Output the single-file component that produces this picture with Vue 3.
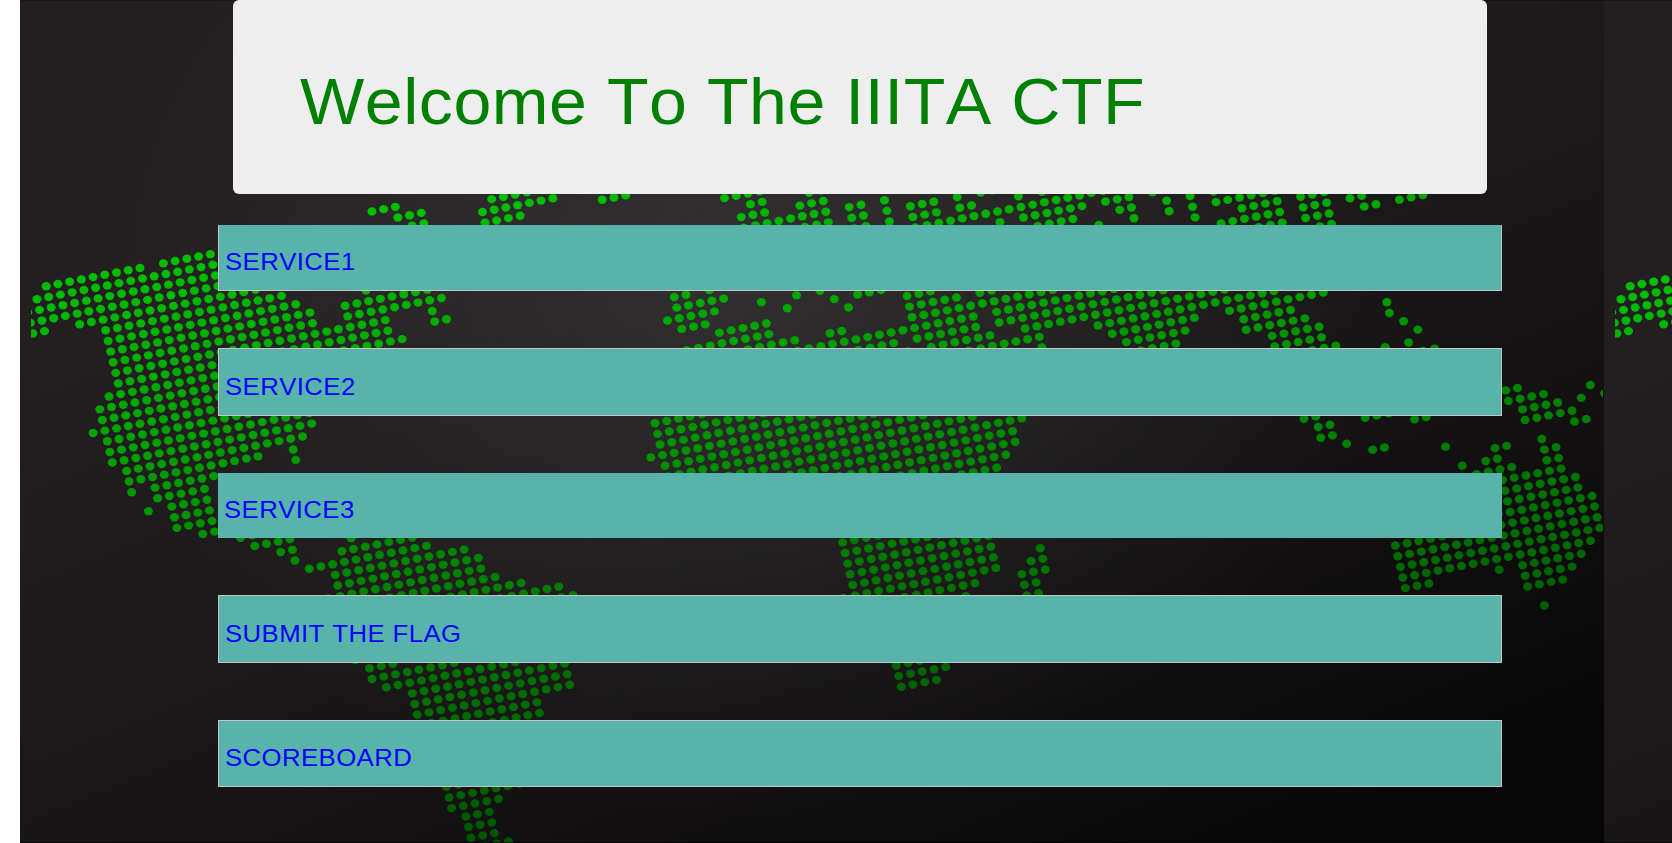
<script setup>
const STEP = [35.17, -6.88]
const COL = [7.545, 31.92]
const DET = STEP[0] * COL[1] - STEP[1] * COL[0]
const ORIGIN = [316, 990]

// Each run is [x, y, lastX] in thirds of a pixel, relative to its region.
const regions = [
  { x: 0, y: 180, runs: [
    [136,317,419],[490,248,631],[108,357,640],[81,394,647],[90,428,655],[98,461,131],[238,434,768],
    [316,450,844],[324,483,887],[331,511,929],[1034,374,1280],[340,545,936],[1042,407,1323],[1097,330,1097],
    [347,577,1155],[1296,391,1296],[355,610,1162],[1304,425,1339],[327,647,1205],[300,686,1100],
    [306,719,900],[279,758,900],[321,784,890],[329,817,929],[336,848,937],[380,874,909],[385,906,776],
    [881,808,881],[393,936,393],[464,922,642],[889,840,889],[473,953,614],[445,994,445],[515,977,622],
    [524,1010,629],[531,1044,637],[609,1062,644],[722,1074,757],[765,1099,871],[843,1114,878],[885,1140,885],
    [1117,95,1187],[1193,116,1265],[1236,137,1272]
  ] },
  { x: 200, y: 180, runs: [[872,57,978],[848,94,1059],[855,129,960],[1208,59,1276]] },
  { x: 640, y: 180, runs: [
    [252,56,358],[331,74,366],[303,110,373],[310,139,556],[478,76,548],[507,40,542],[492,139,564],
    [626,79,661],[634,112,669],[642,142,676],[733,60,733],[741,91,741],[748,123,748],[810,79,880],
    [818,108,888],[951,51,951],[1021,38,1056],[958,81,993],[825,140,1351],[1133,48,1133],[1202,37,1202],
    [1147,112,1323],[1077,127,1077],[1190,138,1296],[1375,133,1375],[1386,36,1386],[1394,64,1464],
    [1437,90,1472],[1480,117,1480],
    [102,354,137],[205,332,205],[109,381,249],[84,422,222],[124,445,194],[237,457,378],[139,507,385],
    [323,505,464],[471,511,999],[361,366,361],[438,386,438],[469,345,469],[538,331,538],[581,357,581],
    [624,381,624],[652,342,722],[568,457,603],[655,507,760],[802,510,802],[801,346,871],[808,377,948],
    [816,410,1235],[830,476,1006],[873,500,1047],[985,510,1197],[1017,341,1052],[1066,394,1420],
    [1074,429,1568],[1155,445,1751],[1204,503,1204],[1376,437,1900],[1415,463,1661],[1457,489,1634],
    [46,729,184],[54,761,368],[61,792,517],[28,832,699],[76,857,849],[83,888,996],[266,887,1145],
    [449,884,1117],[597,887,1125],[780,886,1097],[963,884,1068]
  ] },
  { x: 1080, y: 180, runs: [
    [181,508,286],[447,394,729],[490,419,632],[497,451,675],[575,471,717],[583,502,725],[697,508,767],
    [920,367,920],[927,399,927],[970,427,970],[1013,447,1013],[991,487,991],[914,499,914],[1028,508,1058],
    [671,714,707],[714,739,748],[722,773,756],[799,793,799],[876,808,911],[853,712,923],[1001,718,1037],
    [1095,801,1095],[1147,856,1147],[1189,881,1189],
    [32,40,32],[216,38,216],[257,63,257],[265,95,265],[328,50,328],[336,81,336],[343,112,343],[399,38,399],
    [406,68,583],[484,86,591],[421,132,599],[533,141,606],[661,52,732],[669,83,740],[677,115,747],
    [719,139,754],[810,57,845],[851,81,886],[957,60,1028]
  ] },
  { x: 1280, y: 360, runs: [
    [677,91,712],[684,123,790],[728,148,833],[734,177,873],[903,113,903],[932,73,932],[965,104,965],
    [885,185,921],[645,263,680],[617,302,652],[589,340,695],[787,235,787],[795,268,830],[803,301,838],
    [667,361,845],[675,394,888],[682,426,896],[655,460,937],[344,556,945],[352,588,953],[359,620,960],
    [367,651,932],[375,685,446],[657,631,657],[727,617,906],[735,648,879],[742,682,849],[792,736,792]
  ] },
  { x: 640, y: 400, runs: [
    [608,429,713],[615,460,896],[623,494,1045],[630,524,1052],[638,557,1059],[610,590,1067],[792,587,1005],
    [977,586,977],[1201,445,1201],[1173,485,1209],[1146,522,1216],[1153,557,1188],[1161,585,1196],
    [768,799,873],[776,830,918],[784,862,888]
  ] },
  { x: 240, y: 520, runs: [
    [333,54,333],[306,91,516],[209,144,560],[285,162,672],[293,196,716],[265,228,723],[412,230,765],
    [597,229,843],[780,228,954],[961,227,999],[345,426,345],[388,443,458],[396,476,643],[438,500,826],
    [517,518,975],[525,550,982],[532,582,990],[575,604,891],[758,604,899],[620,800,655],[627,831,840],
    [635,865,777],[677,889,750],[684,920,756],[692,951,764],[735,975,807]
  ] }
]

const dots = new Map()
for (const region of regions) {
  for (const [x, y, lastX] of region.runs) {
    const dx = x + region.x * 3 - ORIGIN[0]
    const dy = y + region.y * 3 - ORIGIN[1]
    const col = Math.round((dx * COL[1] - dy * COL[0]) / DET)
    const row = Math.round((dy * STEP[0] - dx * STEP[1]) / DET)
    const count = Math.round((lastX - x) / STEP[0]) + 1
    for (let i = 0; i < count; i++) {
      const c = col + i
      const px = (ORIGIN[0] + c * STEP[0] + row * COL[0]) / 3
      const py = (ORIGIN[1] + c * STEP[1] + row * COL[1]) / 3
      const green = Math.round(Math.max(78, Math.min(190, 237 - py * 0.165 - px * 0.027)))
      dots.set(`${c}:${row}`, { x: (px + 0.3).toFixed(2), y: (py + 0.3).toFixed(2), fill: `rgb(0,${green},0)` })
    }
  }
}
const mapDots = [...dots.entries()].map(([key, dot]) => ({ key, ...dot }))

const links = [
  { label: 'SERVICE1', kind: 'first' },
  { label: 'SERVICE2', kind: 'second' },
  { label: 'SERVICE3', kind: 'third' },
  { label: 'SUBMIT THE FLAG', kind: 'submit' },
  { label: 'SCOREBOARD', kind: 'score' }
]
</script>

<template>
  <div class="page">
    <svg class="backdrop" width="1652" height="843" viewBox="20 0 1652 843" aria-hidden="true">
      <defs>
        <linearGradient id="shade" gradientUnits="userSpaceOnUse" x1="560" y1="150" x2="900" y2="1000">
          <stop offset="0" stop-color="#231f20" />
          <stop offset="0.4" stop-color="#1b1819" />
          <stop offset="1" stop-color="#080708" />
        </linearGradient>
        <radialGradient id="glow" gradientUnits="userSpaceOnUse" cx="0" cy="0" r="1" gradientTransform="translate(740 290) scale(640 540)">
          <stop offset="0" stop-color="#f8ffff" stop-opacity="0.085" />
          <stop offset="0.5" stop-color="#f8ffff" stop-opacity="0.045" />
          <stop offset="1" stop-color="#f8ffff" stop-opacity="0" />
        </radialGradient>
        <clipPath id="map-clip"><rect x="31" y="0" width="1572" height="843" /></clipPath>
        <g id="tile">
          <rect x="20" y="0" width="1584" height="843" fill="url(#shade)" />
          <rect x="20" y="0" width="1584" height="843" fill="url(#glow)" />
          <g clip-path="url(#map-clip)">
            <ellipse v-for="dot in mapDots" :key="dot.key" :cx="dot.x" :cy="dot.y" rx="4.5" ry="4.2" :fill="dot.fill" />
          </g>
          <rect x="20" y="842" width="1584" height="1" fill="#000" opacity="0.6" />
          <rect x="20" y="0" width="1584" height="1" fill="#000" opacity="0.3" />
        </g>
      </defs>
      <use href="#tile" />
      <use href="#tile" x="1584" />
    </svg>
    <main class="content">
      <header class="jumbotron">
        <h1>Welcome To The IIITA CTF</h1>
      </header>
      <nav class="links">
        <a v-for="link in links" :key="link.label" class="link" :class="link.kind"><span class="label">{{ link.label }}</span></a>
      </nav>
    </main>
  </div>
</template>

<style>
body {
  background: #fff;
  overflow: hidden;
}
</style>

<style scoped>
.page {
  position: relative;
  height: 843px;
  overflow: hidden;
  font-family: "Liberation Sans", Arial, sans-serif;
  font-kerning: none;
}
.backdrop {
  position: absolute;
  top: 0;
  left: 20px;
}
.content {
  position: relative;
  width: 1284px;
  margin-left: 218px;
}
.jumbotron {
  box-sizing: border-box;
  height: 194px;
  margin: 0 15px 31px;
  padding: 65px 0 0 67px;
  border-radius: 6px;
  background: #eee;
}
h1 {
  margin: 0;
  color: #008000;
  font-size: 65.5px;
  font-weight: 400;
  line-height: 74px;
  letter-spacing: 0.5px;
  white-space: nowrap;
  transform: scaleX(1.04);
  transform-origin: 0 0;
}
.links {
  display: flex;
  flex-direction: column;
  gap: 57px;
}
.link {
  box-sizing: border-box;
  height: 68px;
  padding: 24px 0 0 6px;
  border: 1px solid #c4c4c4;
  background: #58b3ab;
  color: #00f;
  font-size: 24.5px;
  line-height: 28px;
  letter-spacing: 0.4px;
  white-space: nowrap;
}
.label {
  display: inline-block;
  transform: scaleX(1.05);
  transform-origin: 0 0;
}
.first {
  height: 66px;
  padding-top: 23px;
  border-top: 0;
}
.third {
  height: 65px;
  padding-top: 23px;
  border: 0;
}
.score {
  height: 67px;
  padding-top: 23px;
}
</style>
